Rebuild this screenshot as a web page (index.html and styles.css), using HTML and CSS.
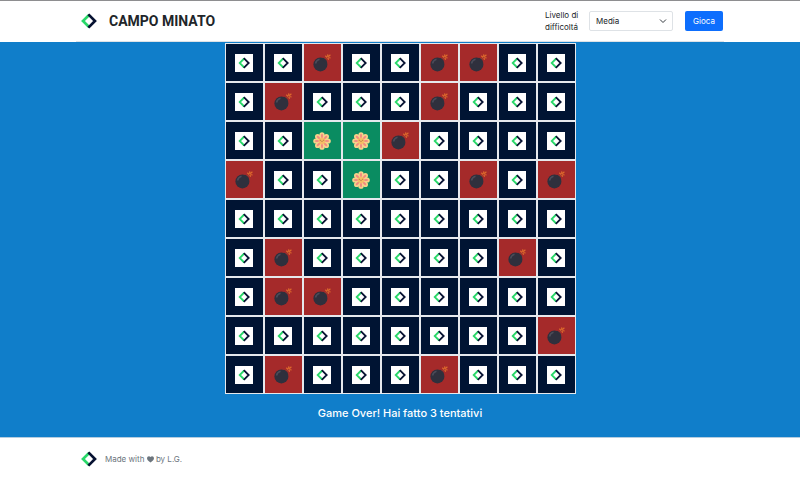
FILE: index.html
```html
<!DOCTYPE html>
<html lang="it">
<head>
  <meta charset="utf-8">
  <meta name="viewport" content="width=device-width, initial-scale=1">
  <title>Campo Minato</title>
  <link rel="stylesheet" href="styles.css">
</head>
<body>
  <svg class="sprite" aria-hidden="true">
    <symbol id="logo" viewBox="0 0 16 16">
      <path d="M8.3 1.8 2 8l6.3 6.2" fill="none" stroke="#29d869" stroke-width="2.7"/>
      <path d="M7.4 1.4 14 8l-6.6 6.6" fill="none" stroke="#071232" stroke-width="2.7"/>
    </symbol>
    <symbol id="safe" viewBox="0 0 18 18">
      <rect width="18" height="18" fill="#fff"/>
      <path d="M9.2 4.5 4.7 9l4.5 4.5" fill="none" stroke="#29d869" stroke-width="1.8"/>
      <path d="M8.8 4.1 13.7 9l-4.9 4.9" fill="none" stroke="#071232" stroke-width="1.8"/>
    </symbol>
    <symbol id="bomb" viewBox="0 0 18 18">
      <path d="M12.5 5.2 14 3.4" stroke="#8d4a35" stroke-width="1"/>
      <path d="M14.2 3.5 12.3 1.8M14.6 2.8 14.8.4M15.2 2.7 17.4.8M15.3 3.5l2.3.5M14.8 4l.8 1.8" stroke="#dd6a2c" stroke-width="1.2"/>
      <circle cx="7.4" cy="10.4" r="7" fill="#2f303d"/>
      <path d="m10.6 3.8 3.4 3.3-1.9 1.9-3.4-3.4z" fill="#2f303d"/>
      <path d="M2.5 9.5q.8-3.3 4-4.2" fill="none" stroke="#4b4c59" stroke-width="1.5"/>
    </symbol>
    <symbol id="flower" viewBox="0 0 18 18">
      <g fill="#f5d28a">
        <circle cx="9" cy="9" r="6.5"/>
        <circle cx="9" cy="2.8" r="2.6"/><circle cx="13.4" cy="4.6" r="2.6"/>
        <circle cx="15.2" cy="9" r="2.6"/><circle cx="13.4" cy="13.4" r="2.6"/>
        <circle cx="9" cy="15.2" r="2.6"/><circle cx="4.6" cy="13.4" r="2.6"/>
        <circle cx="2.8" cy="9" r="2.6"/><circle cx="4.6" cy="4.6" r="2.6"/>
      </g>
      <g fill="#f3887f">
        <ellipse cx="9" cy="4" rx="1" ry="2.2"/><ellipse cx="9" cy="14" rx="1" ry="2.2"/>
        <ellipse cx="4" cy="9" rx="2.2" ry="1"/><ellipse cx="14" cy="9" rx="2.2" ry="1"/>
        <g transform="rotate(45 9 9)">
          <ellipse cx="9" cy="4" rx="1" ry="2.2"/><ellipse cx="9" cy="14" rx="1" ry="2.2"/>
          <ellipse cx="4" cy="9" rx="2.2" ry="1"/><ellipse cx="14" cy="9" rx="2.2" ry="1"/>
        </g>
      </g>
      <circle cx="9" cy="9" r="3.2" fill="#f7bd66"/>
      <path d="M6.8 8.3h1M10.2 8.3h1M8.4 9.3h1.2" stroke="#9c5f3a" stroke-width=".8"/>
    </symbol>
    <symbol id="heart" viewBox="0 0 16 16">
      <path d="M8 15C-7 6 3-3 8 2.5 13-3 23 6 8 15z" fill="currentColor"/>
    </symbol>
  </svg>

  <header class="header">
    <div class="container header-row">
      <a class="brand" href="#"><svg class="logo" aria-hidden="true"><use href="#logo"/></svg><h1 class="title">CAMPO MINATO</h1></a>
      <form class="controls">
        <label class="level-label" for="level">Livello di difficoltá</label>
        <div class="select-wrap">
          <select class="level" id="level">
            <option>Facile</option>
            <option selected>Media</option>
            <option>Difficile</option>
          </select>
          <svg class="chevron" viewBox="0 0 8 8" aria-hidden="true"><path d="m1 2.5 3 3 3-3" fill="none" stroke="#343a40" stroke-width="1"/></svg>
        </div>
        <button class="play" type="button">Gioca</button>
      </form>
    </div>
  </header>

  <main class="main">
    <div class="board" id="board"></div>
    <p class="result">Game Over! Hai fatto 3 tentativi</p>
  </main>

  <footer class="footer">
    <div class="container footer-row">
      <svg class="logo" aria-hidden="true"><use href="#logo"/></svg>
      <p class="credit">Made with <svg class="heart" aria-hidden="true"><use href="#heart"/></svg> by L.G.</p>
    </div>
  </footer>
  <script src="script.js"></script>
</body>
</html>
```
FILE: styles.css
```css
* {
  box-sizing: border-box;
}

body {
  margin: 0;
  min-height: 100vh;
  display: flex;
  flex-direction: column;
  background: #fff;
  color: #212529;
  font: 8px/12px Inter, "Liberation Sans", sans-serif;
}

.sprite {
  position: absolute;
  width: 0;
  height: 0;
}

.container {
  width: 81%;
  margin: 0 auto;
  padding: 0 1px 0 5px;
  display: flex;
  align-items: center;
}

.header {
  border-top: 1px solid #8e8e90;
}

.header-row {
  min-height: 41px;
  justify-content: space-between;
  border-bottom: 1px solid #dee2e6;
}

.brand {
  display: flex;
  align-items: center;
  gap: 12px;
  color: inherit;
  text-decoration: none;
}

.logo {
  width: 16px;
  height: 16px;
}

.title {
  margin: 0;
  font-family: Roboto, Inter, sans-serif;
  font-size: 14px;
  line-height: 16px;
  font-weight: 700;
}

.controls {
  display: flex;
  align-items: center;
  gap: 12px;
}

.level-label {
  width: 36px;
  margin-right: -4px;
}

.select-wrap {
  position: relative;
}

.level {
  display: block;
  width: 84px;
  height: 20px;
  padding: 0 6px;
  appearance: none;
  border: 1px solid #dee2e6;
  border-radius: 2px;
  background: #fff;
  color: inherit;
  font: inherit;
}

.chevron {
  position: absolute;
  top: 6px;
  right: 6px;
  width: 8px;
  height: 8px;
  pointer-events: none;
}

.play {
  width: 38px;
  height: 20px;
  padding: 0;
  border: 0;
  border-radius: 2px;
  background: #0d6efd;
  color: #fff;
  font: inherit;
}

.main {
  flex: 1;
  padding-top: 1px;
  background: #107eca;
}

.board {
  width: 351px;
  margin: 0 auto;
  display: grid;
  grid-template-columns: repeat(9, 1fr);
}

.cell {
  display: flex;
  align-items: center;
  justify-content: center;
  aspect-ratio: 1;
  padding: 0;
  border: 1px solid #e6e9ed;
  background: #001433;
}

.cell-bomb {
  background: #a52a2a;
}

.cell-flower {
  background: #0a8c61;
}

.icon {
  width: 18px;
  height: 18px;
}

.result {
  margin: 12px 0;
  color: #fff;
  font-size: 11px;
  line-height: 14px;
  font-weight: 500;
  text-align: center;
}

.footer {
  border-top: 1px solid #b4cde0;
}

.footer-row {
  min-height: 41px;
  gap: 8px;
}

.credit {
  margin: 0;
  color: #6c757d;
}

.heart {
  width: 7px;
  height: 7px;
  vertical-align: -1px;
}
```
FILE: script.js
```js
// b = bomb, f = flower found by the player, . = safe cell
const rows = [
  "..b..bb..",
  ".b...b...",
  "..ffb....",
  "b..f..b.b",
  ".........",
  ".b.....b.",
  ".bb......",
  "........b",
  ".b...b...",
];

const kinds = {
  b: { icon: "bomb", label: "Bomba" },
  f: { icon: "flower", label: "Fiore" },
  ".": { icon: "safe", label: "Casella" },
};

document.getElementById("board").innerHTML = [...rows.join("")]
  .map((mark) => {
    const { icon, label } = kinds[mark];
    return `<button class="cell cell-${icon}" type="button" aria-label="${label}"><svg class="icon" aria-hidden="true"><use href="#${icon}"/></svg></button>`;
  })
  .join("");
```
